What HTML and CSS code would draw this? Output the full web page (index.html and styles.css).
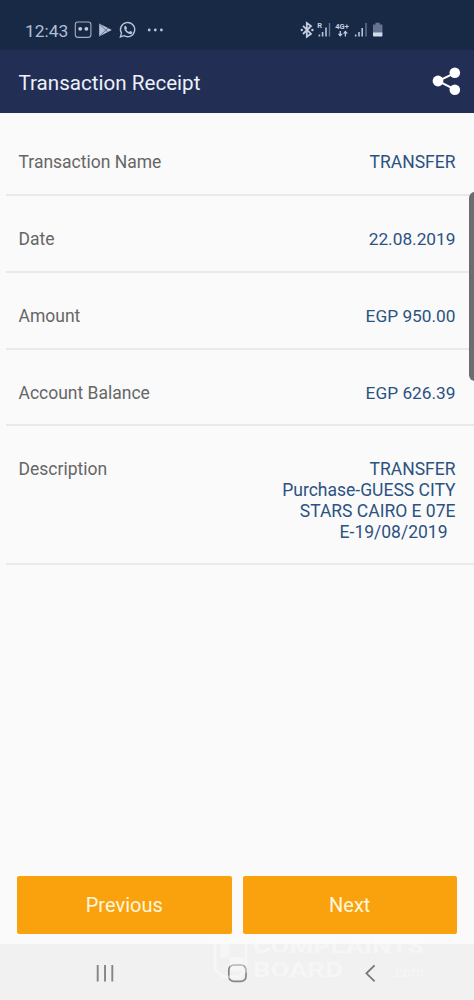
FILE: index.html
```html
<!DOCTYPE html>
<html lang="en">
<head>
<meta charset="utf-8">
<title>Transaction Receipt</title>
<link rel="stylesheet" href="styles.css">
</head>
<body>
<div class="screen">
  <header class="status">
    <span class="time">12:43</span>
    <svg class="left-icons" width="92" height="20" viewBox="74 20 92 20">
      <rect x="75.3" y="22" width="15.6" height="15.4" rx="2.6" fill="none" stroke="#a3aec4" stroke-width="1.1"/>
      <circle cx="80.2" cy="28.8" r="1.9" fill="#c3cce0"/><circle cx="86.4" cy="28.8" r="1.9" fill="#c3cce0"/>
      <path d="M99.2 23.6L111.8 30l-12.6 6.6z" fill="#b9c3d8"/>
      <path d="M99.6 24l8.5 8.4M99.6 36.2l8.5-8.4" stroke="#4a587a" stroke-width=".8"/>
      <path d="M120.4 36.9l1.1-3.7a7.1 7.1 0 1 1 2.5 2.5z" fill="none" stroke="#b9c3d8" stroke-width="1.4"/>
      <path d="M124.4 26.3l1.5-.5 1.2 2.5-.9 1.1c.7 1.3 1.5 2 2.8 2.6l1.1-1.1 2.3 1.1c-.1 1.7-1.2 2.3-2.5 2.1-3.2-.6-6.6-4-5.5-7.8z" fill="#b9c3d8"/>
      <circle cx="149.2" cy="30" r="1.4" fill="#b9c3d8"/><circle cx="155.3" cy="30" r="1.4" fill="#b9c3d8"/><circle cx="161.4" cy="30" r="1.4" fill="#b9c3d8"/>
    </svg>
    <svg class="right-icons" width="84" height="20" viewBox="300 20 84 20">
      <path d="M303 25.8l8 8-4.2 3V23l4.2 3-8 8" fill="none" stroke="#c3cce0" stroke-width="1.8"/>
      <circle cx="301.8" cy="30" r="1.2" fill="#c3cce0"/><circle cx="312.4" cy="30" r="1.2" fill="#c3cce0"/>
      <text x="317.3" y="28.3" class="tiny">R</text>
      <path d="M319.4 34.5v2M322.6 32v4.500M326 27.500v9" stroke="#b9c3d8" stroke-width="1.6"/>
      <path d="M329.5 23v13.5" stroke="#66748f" stroke-width="1.4"/>
      <text x="335.3" y="29" class="tiny">4G+</text>
      <path d="M340.3 31v5M345.4 36.500v-5" stroke="#c3cce0" stroke-width="1.3"/>
      <path d="M337.8 33.8h5l-2.500 3zM342.900 33.600h5l-2.500-3z" fill="#c3cce0"/>
      <path d="M355.7 34.500v2M359 32v4.500M362.200 28v8.500" stroke="#b9c3d8" stroke-width="1.6"/>
      <path d="M366 23v13.5" stroke="#66748f" stroke-width="1.4"/>
      <path d="M375.5 22.700h4.300v1.700h2.600V33h-9.400v-8.600h2.500z" fill="#66748f"/>
      <path d="M373 32.600h9.400v3.200q0 .8-.8.800h-7.800q-.8 0-.8-.8z" fill="#d3dbea"/>
    </svg>
  </header>
  <div class="appbar">
    <h1>Transaction Receipt</h1>
    <svg class="share" width="30" height="30" viewBox="431 66 30 30">
      <path d="M455.2 72.800L438 81l17.200 8.700" fill="none" stroke="#fff" stroke-width="2"/>
      <circle cx="438" cy="81" r="5.400" fill="#fff"/><circle cx="454.800" cy="72.800" r="5.300" fill="#fff"/><circle cx="454.800" cy="89.700" r="5.300" fill="#fff"/>
    </svg>
  </div>
  <main class="rows">
    <div class="row"><span class="label">Transaction Name</span><span class="value">TRANSFER</span></div>
    <div class="row"><span class="label">Date</span><span class="value num">22.08.2019</span></div>
    <div class="row"><span class="label">Amount</span><span class="value num">EGP 950.00</span></div>
    <div class="row"><span class="label">Account Balance</span><span class="value num">EGP 626.39</span></div>
    <div class="row last"><span class="label">Description</span><span class="value">TRANSFER<br>Purchase-GUESS CITY<br>STARS CAIRO E 07E<br><span class="trail">E-19/08/2019</span></span></div>
  </main>
  <div class="actions"><button class="btn">Previous</button><button class="btn">Next</button></div>
  <nav class="navbar">
    <svg width="474" height="56" viewBox="0 944 474 56">
      <path d="M97.700 965v16.500M105 965v16.500M112.300 965v16.500" stroke="#858585" stroke-width="1.900"/>
      <rect x="228.800" y="965" width="17.200" height="16.400" rx="5" fill="none" stroke="#858585" stroke-width="1.700"/>
      <path d="M374.600 965.300l-8.200 8 8.200 8" fill="none" stroke="#777" stroke-width="1.800"/>
    </svg>
  </nav>
  <div class="edge-handle"></div>
  <svg class="watermark" width="224" height="54" viewBox="210 934 224 54">
    <path d="M215 940h31v31l-8 6h-14l-9-7z" fill="none" stroke="#fff" stroke-width="3"/>
    <path d="M220 942h9v15h-9zM230 957h14v14h-14z" fill="#fff"/>
    <text x="253" y="953" class="mark" textLength="171" lengthAdjust="spacingAndGlyphs">COMPLAINTS</text>
    <text x="253" y="977" class="mark" textLength="90" lengthAdjust="spacingAndGlyphs">BOARD</text>
    <text x="391" y="977" class="mark thin" textLength="33" lengthAdjust="spacingAndGlyphs">.com</text>
  </svg>
</div>
</body>
</html>
```
FILE: styles.css
```css
* { box-sizing: border-box; }
body { margin: 0; font-family: Roboto, "Liberation Sans", sans-serif; }
.screen { position: relative; width: 474px; height: 1000px; overflow: hidden; display: flex; flex-direction: column; background: #fafafa; }
.status { height: 50px; padding: 11px 90px 0 25px; display: flex; align-items: center; background: #182946; }
.time { width: 49px; font-size: 17.4px; color: #b3bed3; }
.left-icons, .right-icons { margin-top: -1px; }
.right-icons { margin-left: auto; }
.tiny { font-size: 7.5px; font-weight: 700; fill: #c3cce0; }
.appbar { height: 63px; padding: 0 13px 0 18.5px; display: flex; align-items: center; justify-content: space-between; background: #222e54; }
.appbar h1 { margin: 2px 0 0; font-size: 20.6px; font-weight: 400; color: #edf1fa; }
.share { margin-top: -1px; }
.rows { padding-left: 6px; flex: 1; }
.row { height: 76.8px; padding: 33px 18.5px 0 12.5px; display: flex; justify-content: space-between; border-bottom: 2px solid #e9e9ea; font-size: 17.5px; line-height: 20.7px; }
.row:first-child { height: 83px; padding-top: 39px; }
.row.last { height: 138.6px; }
.label { color: #666; }
.value { color: #2c5282; text-align: right; }
.num { font-size: 17.3px; }
.trail { padding-right: 8px; }
.actions { display: flex; gap: 11px; padding: 0 17px 10.5px; }
.btn { flex: 1; height: 57.5px; padding: 1px 0 0; border: 0; border-radius: 2px; background: #faa20e; color: #fff6df; font: 20px Roboto, sans-serif; }
.navbar { height: 56px; background: #f1f1f1; }
.navbar svg { display: block; }
.edge-handle { position: absolute; left: 469px; top: 192px; width: 12px; height: 189px; border-radius: 6px; background: #6c6b70; }
.watermark { position: absolute; left: 210px; top: 934px; opacity: .38; }
.mark { font-size: 20px; font-weight: 700; fill: #fff; }
.thin { font-size: 15px; font-weight: 400; }
```
